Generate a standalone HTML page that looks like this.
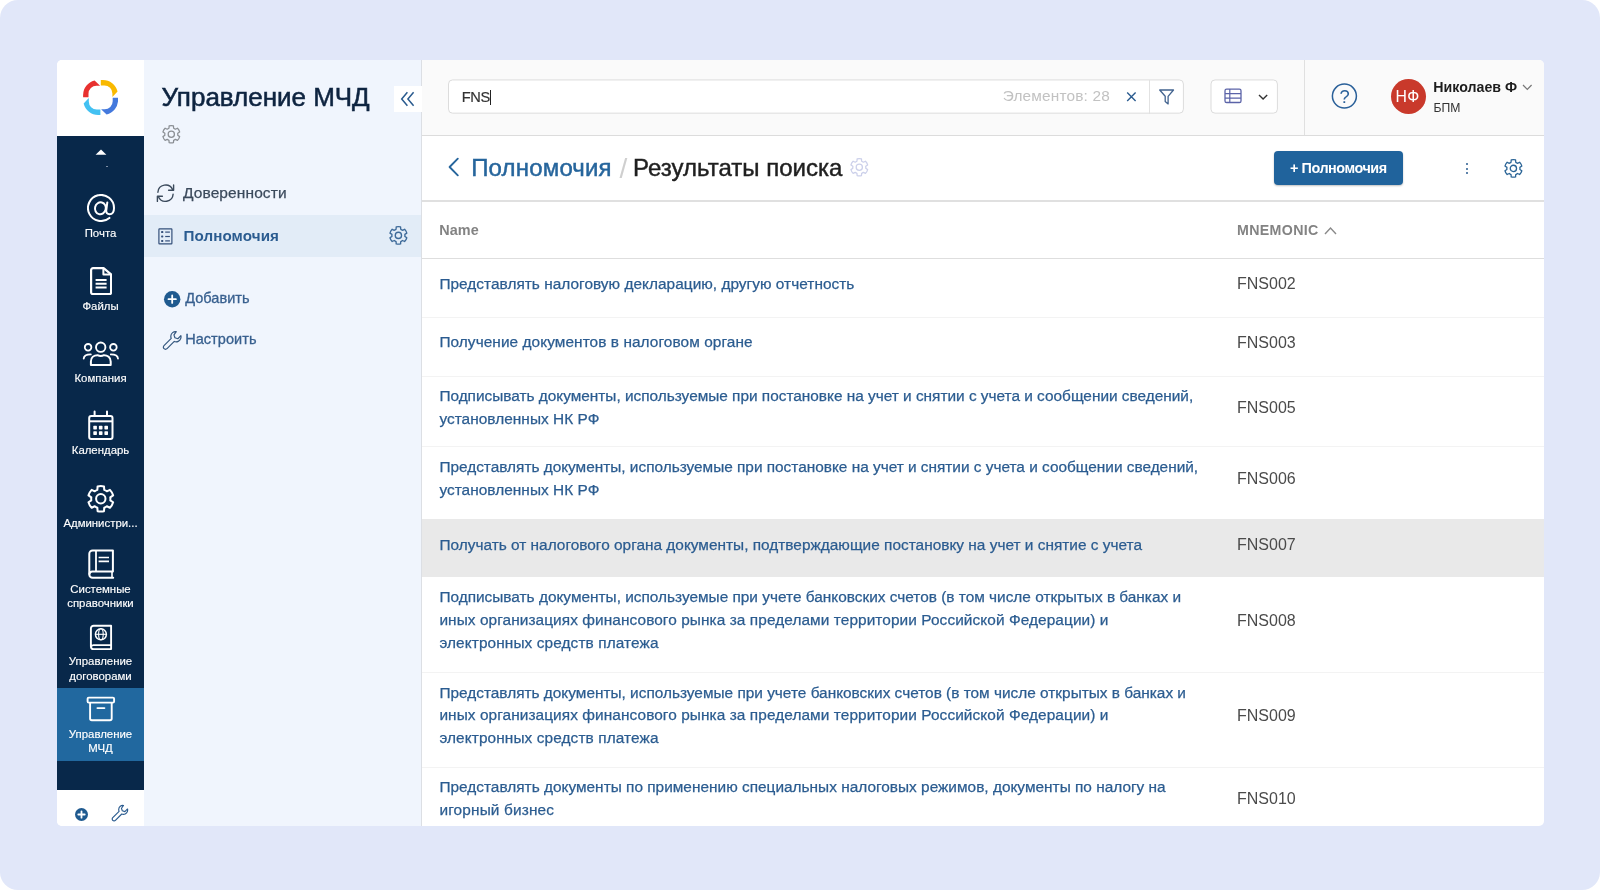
<!DOCTYPE html>
<html lang="ru">
<head>
<meta charset="utf-8">
<title>Управление МЧД</title>
<style>
*{box-sizing:border-box;margin:0;padding:0}
html,body{width:1600px;height:890px;overflow:hidden;background:#fff}
body{font-family:"Liberation Sans",sans-serif;color:#333;position:relative}
.abs{position:absolute}
.t{position:absolute;line-height:1;white-space:nowrap}
#frame{position:absolute;left:0;top:0;width:1600px;height:890px;background:#e1e7f9;border-radius:18px;overflow:hidden}
#card{position:absolute;left:57px;top:60px;width:1487px;height:766px;background:#fff;border-radius:5px;overflow:hidden}
#o{position:absolute;left:-57px;top:-60px;width:1600px;height:890px;will-change:transform}
.sl{position:absolute;left:57px;width:87px;text-align:center;color:#fff;font-size:11.4px;-webkit-text-stroke:0.15px #fff;line-height:1;white-space:nowrap}
.nm{position:absolute;left:439.5px;color:#2b5c90;font-size:15.4px;line-height:23.4px;white-space:nowrap}
.mc{position:absolute;left:1237px;color:#4b4b4b;font-size:16px;line-height:1;white-space:nowrap}
</style>
</head>
<body>
<div id="frame">
<div id="card">
<div id="o">
<!-- sidebar -->
<div class="abs" style="left:57px;top:60px;width:87px;height:766px;background:#08284a;"></div>
<div class="abs" style="left:57px;top:60px;width:87px;height:76px;background:#fff;"></div>
<svg class="abs" style="left:83px;top:80px" width="35.2" height="35" viewBox="0 0 35.2 35" fill="none" ><path d="M0.1 17.3V15.1A15 15 0 0 1 11.6 0.55L17.1 5.7H13.5A8 8 0 0 0 5.5 13.7V17.3Z" fill="#e8312f" transform="rotate(0 17.6 17.5)"/><path d="M0.1 17.3V15.1A15 15 0 0 1 11.6 0.55L17.1 5.7H13.5A8 8 0 0 0 5.5 13.7V17.3Z" fill="#f9b900" transform="rotate(90 17.6 17.5)"/><path d="M0.1 17.3V15.1A15 15 0 0 1 11.6 0.55L17.1 5.7H13.5A8 8 0 0 0 5.5 13.7V17.3Z" fill="#4479dd" transform="rotate(180 17.6 17.5)"/><path d="M0.1 17.3V15.1A15 15 0 0 1 11.6 0.55L17.1 5.7H13.5A8 8 0 0 0 5.5 13.7V17.3Z" fill="#43c1f2" transform="rotate(270 17.6 17.5)"/></svg>
<svg class="abs" style="left:94px;top:148px" width="14" height="8" viewBox="0 0 14 8" fill="none" ><path d="M1.6 6.8L7 1.4L12.4 6.8Z" fill="#fff"/></svg>
<div class="abs" style="left:106px;top:166px;width:1.5px;height:1.2px;background:#7d8da3;"></div>
<svg class="abs" style="left:86.8px;top:194.3px" width="28" height="28" viewBox="0 0 28 28" fill="none" ><path d="M22.4 23.9A13 13 0 1 1 27 14C27 18 25 20.2 22.6 20.2C20.2 20.2 18.9 18.6 19.3 16.2L20.3 8.4" stroke="#fff" stroke-width="2" stroke-linecap="round"/><ellipse cx="13.4" cy="14.3" rx="5.4" ry="6" transform="rotate(14 13.4 14.3)" stroke="#fff" stroke-width="2"/></svg>
<div class="sl" style="top:227.65px">Почта</div>
<svg class="abs" style="left:89.7px;top:266.8px" width="22.2" height="28.3" viewBox="0 0 22.2 28.3" fill="none" ><path d="M3.6 1.1H13.6L21.1 7.4V25.2A2 2 0 0 1 19.1 27.2H3.1A2 2 0 0 1 1.1 25.2V3.1A2 2 0 0 1 3.1 1.1Z" stroke="#fff" stroke-width="2.2" stroke-linejoin="round"/><path d="M13.4 1.4V7.6H21" stroke="#fff" stroke-width="2" stroke-linejoin="round"/><path d="M5.6 13.1H16.6M5.6 16.8H16.6M5.6 20.4H16.6" stroke="#fff" stroke-width="2"/></svg>
<div class="sl" style="top:300.85px">Файлы</div>
<svg class="abs" style="left:82px;top:340px" width="38" height="27" viewBox="0 0 38 27" fill="none" ><circle cx="18.7" cy="7.2" r="4.7" stroke="#fff" stroke-width="1.9"/><circle cx="6.1" cy="7.3" r="3.3" stroke="#fff" stroke-width="1.8"/><circle cx="31.4" cy="7.3" r="3.3" stroke="#fff" stroke-width="1.8"/><path d="M8.9 25H28.7V21.5C28.7 17.5 25.5 15.2 22 15.2C20 16.2 17.5 16.2 15.5 15.2C12 15.2 8.9 17.5 8.9 21.5Z" stroke="#fff" stroke-width="2" stroke-linejoin="round"/><path d="M1.7 18.6C1.9 16 4 14.4 8.8 14.4" stroke="#fff" stroke-width="1.8" stroke-linecap="round"/><path d="M36 18.6C35.8 16 33.6 14.4 28.8 14.4" stroke="#fff" stroke-width="1.8" stroke-linecap="round"/></svg>
<div class="sl" style="top:372.55px">Компания</div>
<svg class="abs" style="left:87px;top:410px" width="28" height="32" viewBox="0 0 28 32" fill="none" ><rect x="2.2" y="6.1" width="23.3" height="23" rx="2" stroke="#fff" stroke-width="2"/><path d="M2.2 11.3H25.5" stroke="#fff" stroke-width="2"/><path d="M7.6 1.6V6M20 1.6V6" stroke="#fff" stroke-width="2" stroke-linecap="round"/><rect x="6.3" y="15.8" width="3.6" height="3.6" rx="0.6" fill="#fff"/><rect x="6.3" y="21.3" width="3.6" height="3.6" rx="0.6" fill="#fff"/><rect x="11.9" y="15.8" width="3.6" height="3.6" rx="0.6" fill="#fff"/><rect x="11.9" y="21.3" width="3.6" height="3.6" rx="0.6" fill="#fff"/><rect x="17.4" y="15.8" width="3.6" height="3.6" rx="0.6" fill="#fff"/><rect x="17.4" y="21.3" width="3.6" height="3.6" rx="0.6" fill="#fff"/></svg>
<div class="sl" style="top:445.45px">Календарь</div>
<svg class="abs" style="left:85.1px;top:482.6px" width="31.6" height="31.6" viewBox="0 0 31.6 31.6" fill="none" ><path d="M19.24 6.84L19 3.41A12.8 12.8 0 0 0 12.6 3.41L12.36 6.84A9.6 9.6 0 0 0 9.76 8.34L6.67 6.83A12.8 12.8 0 0 0 3.47 12.38L6.32 14.3A9.6 9.6 0 0 0 6.32 17.3L3.47 19.22A12.8 12.8 0 0 0 6.67 24.77L9.76 23.26A9.6 9.6 0 0 0 12.36 24.76L12.6 28.19A12.8 12.8 0 0 0 19 28.19L19.24 24.76A9.6 9.6 0 0 0 21.84 23.26L24.93 24.77A12.8 12.8 0 0 0 28.13 19.22L25.28 17.3A9.6 9.6 0 0 0 25.28 14.3L28.13 12.38A12.8 12.8 0 0 0 24.93 6.83L21.84 8.34A9.6 9.6 0 0 0 19.24 6.84Z" stroke="#fff" stroke-width="2" stroke-linejoin="round"/><circle cx="15.8" cy="15.8" r="4.7" stroke="#fff" stroke-width="2"/></svg>
<div class="sl" style="top:517.85px">Администри...</div>
<svg class="abs" style="left:87px;top:548px" width="28" height="32" viewBox="0 0 28 32" fill="none" ><path d="M25.9 23.5V2.4H5.6A3.3 3.3 0 0 0 2.3 5.7V26.4A3.3 3.3 0 0 0 5.6 29.7H26.2" stroke="#fff" stroke-width="2" stroke-linejoin="round" stroke-linecap="round"/><path d="M25.9 23.5H5.4A3.1 3.1 0 0 0 2.4 26.5" stroke="#fff" stroke-width="2"/><path d="M9 2.4V23.5" stroke="#fff" stroke-width="1.8"/><path d="M25 23.5V29.7" stroke="#fff" stroke-width="1.6"/><path d="M11.6 9.5H22M11.6 13.3H22" stroke="#fff" stroke-width="1.7"/></svg>
<div class="sl" style="top:583.55px">Системные</div>
<div class="sl" style="top:597.55px">справочники</div>
<svg class="abs" style="left:88px;top:623px" width="26" height="28" viewBox="0 0 26 28" fill="none" ><path d="M23.1 22.1V2.7H5.6A2.7 2.7 0 0 0 2.9 5.4V23.4A2.7 2.7 0 0 0 5.6 26.1H23.1V22.1H5.6A2.6 2.6 0 0 0 3 24" stroke="#fff" stroke-width="1.9" stroke-linejoin="round"/><circle cx="12.9" cy="11.3" r="5.5" stroke="#fff" stroke-width="1.5"/><ellipse cx="12.9" cy="11.3" rx="2.3" ry="5.5" stroke="#fff" stroke-width="1.1"/><path d="M7.4 11.3H18.4" stroke="#fff" stroke-width="1.1"/></svg>
<div class="sl" style="top:655.75px">Управление</div>
<div class="sl" style="top:670.65px">договорами</div>
<div class="abs" style="left:57px;top:688px;width:87px;height:72.8px;background:#21689f;"></div>
<svg class="abs" style="left:85px;top:695px" width="32" height="28" viewBox="0 0 32 28" fill="none" ><rect x="2.6" y="2.6" width="26.5" height="5" rx="1.2" stroke="#fff" stroke-width="1.9"/><path d="M5.1 7.8V23.6A1.7 1.7 0 0 0 6.8 25.3H25A1.7 1.7 0 0 0 26.7 23.6V7.8" stroke="#fff" stroke-width="1.9"/><path d="M12.4 13.1H19.4" stroke="#fff" stroke-width="1.9" stroke-linecap="round"/></svg>
<div class="sl" style="top:728.75px">Управление</div>
<div class="sl" style="top:742.75px">МЧД</div>
<div class="abs" style="left:57px;top:790px;width:87px;height:36px;background:#fff;"></div>
<svg class="abs" style="left:73.8px;top:806.6px" width="15" height="15" viewBox="0 0 15 15" fill="none" ><circle cx="7.5" cy="7.5" r="6.5" fill="#1f5a8f"/><path d="M4.3 7.5H10.7M7.5 4.3V10.7" stroke="#fff" stroke-width="1.8" stroke-linecap="round"/></svg>
<svg class="abs" style="left:111.2px;top:804.4px" width="18.4" height="18.4" viewBox="0 0 20 20" fill="none" ><path d="M13.6 1.6C11 1.2 8.6 3 8.4 5.7C8.35 6.5 8.5 7.3 8.8 8L1.9 14.9C1.1 15.7 1.1 17 1.9 17.8C2.7 18.6 4 18.6 4.8 17.8L11.7 10.9C14.2 11.9 17.1 10.6 17.9 8C18.2 7.1 18.2 6.2 18 5.4L15.1 8.3L12.3 7.4L11.4 4.6Z" stroke="#2a5b8f" stroke-width="1.25" stroke-linejoin="round"/></svg>
<!-- panel -->
<div class="abs" style="left:144px;top:60px;width:277.5px;height:766px;background:#f0f5fd;"></div>
<div class="abs" style="left:420.8px;top:60px;width:1.2px;height:766px;background:#dcdfe4;"></div>
<div class="abs" style="left:394px;top:86.4px;width:28px;height:25.5px;background:#fff;"></div>
<svg class="abs" style="left:399px;top:89px" width="17" height="20" viewBox="0 0 17 20" fill="none" ><path d="M8.4 3.2L2.7 10L8.4 16.8M14.6 3.2L8.9 10L14.6 16.8" stroke="#2a5b8f" stroke-width="1.5"/></svg>
<div class="t" style="left:161.5px;top:84.39px;font-size:26px;color:#0e2440;-webkit-text-stroke:0.55px #0e2440;">Управление МЧД</div>
<svg class="abs" style="left:159.8px;top:123px" width="22.6" height="22.6" viewBox="0 0 22.6 22.6" fill="none" ><path d="M13.63 5.23L13.47 2.9A8.68 8.68 0 0 0 9.13 2.9L8.97 5.23A6.51 6.51 0 0 0 7.21 6.24L5.11 5.22A8.68 8.68 0 0 0 2.94 8.98L4.87 10.28A6.51 6.51 0 0 0 4.87 12.32L2.94 13.62A8.68 8.68 0 0 0 5.11 17.38L7.21 16.36A6.51 6.51 0 0 0 8.97 17.37L9.13 19.7A8.68 8.68 0 0 0 13.47 19.7L13.63 17.37A6.51 6.51 0 0 0 15.39 16.36L17.49 17.38A8.68 8.68 0 0 0 19.66 13.62L17.73 12.32A6.51 6.51 0 0 0 17.73 10.28L19.66 8.98A8.68 8.68 0 0 0 17.49 5.22L15.39 6.24A6.51 6.51 0 0 0 13.63 5.23Z" stroke="#8b8f94" stroke-width="1.25" stroke-linejoin="round"/><circle cx="11.3" cy="11.3" r="3.12" stroke="#8b8f94" stroke-width="1.25"/></svg>
<svg class="abs" style="left:155px;top:183px" width="21" height="21" viewBox="0 0 21 21" fill="none" ><path d="M2.9 9.2A7.7 7.7 0 0 1 17.6 6.6" stroke="#3b4a5c" stroke-width="1.4" stroke-linecap="round"/><path d="M18.6 2V7.2H13.6" stroke="#3b4a5c" stroke-width="1.4" stroke-linecap="round" stroke-linejoin="round"/><path d="M18.1 11.2A7.7 7.7 0 0 1 3.4 13.8" stroke="#3b4a5c" stroke-width="1.4" stroke-linecap="round"/><path d="M2.4 18.4V13.2H7.4" stroke="#3b4a5c" stroke-width="1.4" stroke-linecap="round" stroke-linejoin="round"/></svg>
<div class="t" style="left:183px;top:185.08px;font-size:15.5px;color:#3b4a5c;letter-spacing:0.1px;-webkit-text-stroke:0.25px #3b4a5c;">Доверенности</div>
<div class="abs" style="left:144px;top:214.8px;width:276.8px;height:42.6px;background:#e2ecf7;"></div>
<svg class="abs" style="left:157px;top:227px" width="18" height="19" viewBox="0 0 18 19" fill="none" ><rect x="1.9" y="1.8" width="13" height="15" rx="0.6" stroke="#35507b" stroke-width="1.2"/><rect x="4.1" y="4.1" width="2.2" height="2" rx="0.7" fill="#35507b"/><path d="M8.2 5.1H12.9" stroke="#35507b" stroke-width="1.2"/><rect x="4.1" y="8.5" width="2.2" height="2" rx="0.7" fill="#35507b"/><path d="M8.2 9.5H12.9" stroke="#35507b" stroke-width="1.2"/><rect x="4.1" y="12.9" width="2.2" height="2" rx="0.7" fill="#35507b"/><path d="M8.2 13.9H12.9" stroke="#35507b" stroke-width="1.2"/></svg>
<div class="t" style="left:183.4px;top:227.93px;font-size:15.2px;color:#2b5c90;font-weight:700;letter-spacing:0.1px;">Полномочия</div>
<svg class="abs" style="left:386.6px;top:224.4px" width="22.8" height="22.8" viewBox="0 0 22.8 22.8" fill="none" ><path d="M13.75 5.29L13.58 2.95A8.72 8.72 0 0 0 9.22 2.95L9.05 5.29A6.54 6.54 0 0 0 7.28 6.31L5.18 5.28A8.72 8.72 0 0 0 2.99 9.07L4.94 10.38A6.54 6.54 0 0 0 4.94 12.42L2.99 13.73A8.72 8.72 0 0 0 5.18 17.52L7.28 16.49A6.54 6.54 0 0 0 9.05 17.51L9.22 19.85A8.72 8.72 0 0 0 13.58 19.85L13.75 17.51A6.54 6.54 0 0 0 15.52 16.49L17.62 17.52A8.72 8.72 0 0 0 19.81 13.73L17.86 12.42A6.54 6.54 0 0 0 17.86 10.38L19.81 9.07A8.72 8.72 0 0 0 17.62 5.28L15.52 6.31A6.54 6.54 0 0 0 13.75 5.29Z" stroke="#3d6a99" stroke-width="1.35" stroke-linejoin="round"/><circle cx="11.4" cy="11.4" r="3.14" stroke="#3d6a99" stroke-width="1.35"/></svg>
<svg class="abs" style="left:163.1px;top:289.9px" width="18.4" height="18.4" viewBox="0 0 18.4 18.4" fill="none" ><circle cx="9.2" cy="9.2" r="8.2" fill="#1f5a8f"/><path d="M5.5 9.2H12.9M9.2 5.5V12.9" stroke="#fff" stroke-width="1.8" stroke-linecap="round"/></svg>
<div class="t" style="left:185.2px;top:291.13px;font-size:14.5px;color:#38608f;letter-spacing:0.05px;-webkit-text-stroke:0.3px #38608f;">Добавить</div>
<svg class="abs" style="left:161.6px;top:329.6px" width="21" height="21" viewBox="0 0 20 20" fill="none" ><path d="M13.6 1.6C11 1.2 8.6 3 8.4 5.7C8.35 6.5 8.5 7.3 8.8 8L1.9 14.9C1.1 15.7 1.1 17 1.9 17.8C2.7 18.6 4 18.6 4.8 17.8L11.7 10.9C14.2 11.9 17.1 10.6 17.9 8C18.2 7.1 18.2 6.2 18 5.4L15.1 8.3L12.3 7.4L11.4 4.6Z" stroke="#35587f" stroke-width="1.15" stroke-linejoin="round"/></svg>
<div class="t" style="left:185.2px;top:332.23px;font-size:14.5px;color:#38608f;letter-spacing:0.05px;-webkit-text-stroke:0.3px #38608f;">Настроить</div>
<!-- topbar -->
<div class="abs" style="left:422px;top:60px;width:1122px;height:75px;background:#fafafa;"></div>
<div class="abs" style="left:422px;top:134.6px;width:1122px;height:1.2px;background:#dcdcdc;"></div>
<div class="abs" style="left:1304.3px;top:60px;width:1.2px;height:75px;background:#e0e0e0;"></div>
<svg class="abs" style="left:446px;top:77px" width="740" height="39" viewBox="0 0 740 39" fill="none" ><rect x="2.5" y="2.95" width="734.9" height="33.2" rx="4" fill="#fff" stroke="#dcdcdc" stroke-width="1"/></svg>
<div class="abs" style="left:1149px;top:80px;width:1px;height:33.5px;background:#e2e2e2;"></div>
<div class="t" style="left:461.8px;top:90.04px;font-size:14.6px;color:#333;letter-spacing:-0.4px;-webkit-text-stroke:0.2px #333;">FNS</div>
<div class="abs" style="left:489.6px;top:89.6px;width:1.2px;height:15.6px;background:#222;"></div>
<div class="t" style="left:1002.7px;top:87.76px;font-size:15.4px;color:#c2c2c2;letter-spacing:0.17px;">Элементов: 28</div>
<svg class="abs" style="left:1125px;top:91px" width="13" height="12" viewBox="0 0 13 12" fill="none" ><path d="M2.2 1.6L10.6 10M10.6 1.6L2.2 10" stroke="#2a5b8f" stroke-width="1.4"/></svg>
<svg class="abs" style="left:1157px;top:87px" width="19" height="19" viewBox="0 0 19 19" fill="none" ><path d="M2.7 3H16.5L11.1 9.3V16.9L8.2 14.6V9.3Z" stroke="#42638f" stroke-width="1.3" stroke-linejoin="round"/></svg>
<svg class="abs" style="left:1208px;top:77px" width="72" height="39" viewBox="0 0 72 39" fill="none" ><rect x="3" y="2.95" width="66.4" height="33.2" rx="4" fill="#fff" stroke="#dcdcdc" stroke-width="1"/></svg>
<svg class="abs" style="left:1223px;top:87px" width="20" height="17" viewBox="0 0 20 17" fill="none" ><rect x="2" y="2.1" width="16" height="13.4" rx="1.6" stroke="#5b63a8" stroke-width="1.3"/><path d="M2 6.6H18M2 11.1H18M6.8 2.1V15.5" stroke="#5b63a8" stroke-width="1.2"/></svg>
<svg class="abs" style="left:1257.2px;top:92.9px" width="12.2" height="8" viewBox="0 0 12.2 8" fill="none" ><path d="M2 2L6.1 6L10.2 2" stroke="#333" stroke-width="1.4"/></svg>
<svg class="abs" style="left:1330px;top:82px" width="29" height="29" viewBox="0 0 29 29" fill="none" ><circle cx="14.4" cy="14.1" r="12" stroke="#2a6099" stroke-width="1.5"/></svg>
<div class="t" style="left:1339.6px;top:87.92px;font-size:18.4px;color:#2a6099;">?</div>
<div class="abs" style="left:1391px;top:79.1px;width:35px;height:35px;background:#c9392b;border-radius:50%;"></div>
<div class="t" style="left:1395.4px;top:88.93px;font-size:15.8px;color:#fff;letter-spacing:0.5px;">НФ</div>
<div class="t" style="left:1433.3px;top:80.38px;font-size:14.2px;color:#1d1d1d;font-weight:700;">Николаев Ф</div>
<svg class="abs" style="left:1520.8px;top:83.3px" width="12.6" height="8.5" viewBox="0 0 12.6 8.5" fill="none" ><path d="M2 2L6.3 6.5L10.6 2" stroke="#777" stroke-width="1.2"/></svg>
<div class="t" style="left:1433.4px;top:101.87px;font-size:12.2px;color:#333;">БПМ</div>
<!-- header -->
<svg class="abs" style="left:446px;top:156px" width="14" height="22" viewBox="0 0 14 22" fill="none" ><path d="M11.8 2.7L3.6 11L11.8 19.3" stroke="#26659c" stroke-width="1.9" stroke-linecap="round" stroke-linejoin="round"/></svg>
<div class="t" style="left:471.2px;top:155.88px;font-size:24px;color:#26659c;letter-spacing:0.17px;-webkit-text-stroke:0.45px #26659c;">Полномочия</div>
<div class="t" style="left:619.6px;top:154.9px;font-size:28px;color:#cfcfcf;">/</div>
<div class="t" style="left:633.1px;top:155.88px;font-size:24px;color:#1f1f1f;-webkit-text-stroke:0.45px #1f1f1f;">Результаты поиска</div>
<svg class="abs" style="left:848px;top:156.2px" width="22.6" height="22.6" viewBox="0 0 22.6 22.6" fill="none" ><path d="M13.63 5.23L13.47 2.9A8.68 8.68 0 0 0 9.13 2.9L8.97 5.23A6.51 6.51 0 0 0 7.21 6.24L5.11 5.22A8.68 8.68 0 0 0 2.94 8.98L4.87 10.28A6.51 6.51 0 0 0 4.87 12.32L2.94 13.62A8.68 8.68 0 0 0 5.11 17.38L7.21 16.36A6.51 6.51 0 0 0 8.97 17.37L9.13 19.7A8.68 8.68 0 0 0 13.47 19.7L13.63 17.37A6.51 6.51 0 0 0 15.39 16.36L17.49 17.38A8.68 8.68 0 0 0 19.66 13.62L17.73 12.32A6.51 6.51 0 0 0 17.73 10.28L19.66 8.98A8.68 8.68 0 0 0 17.49 5.22L15.39 6.24A6.51 6.51 0 0 0 13.63 5.23Z" stroke="#ccd0ea" stroke-width="1.25" stroke-linejoin="round"/><circle cx="11.3" cy="11.3" r="3.12" stroke="#ccd0ea" stroke-width="1.25"/></svg>
<div class="abs" style="left:1274px;top:151px;width:128.6px;height:34px;background:#20639c;border-radius:4px;box-shadow:0 1px 2px rgba(0,0,0,.25);"></div>
<div class="t" style="left:1290px;top:161.41px;font-size:14.4px;color:#fff;font-weight:700;letter-spacing:-0.45px;">+ Полномочия</div>
<div class="abs" style="left:1465.6px;top:163px;width:2px;height:2px;background:#2a5b8f;border-radius:1px;"></div><div class="abs" style="left:1465.6px;top:167.7px;width:2px;height:2px;background:#2a5b8f;border-radius:1px;"></div><div class="abs" style="left:1465.6px;top:172.4px;width:2px;height:2px;background:#2a5b8f;border-radius:1px;"></div>
<svg class="abs" style="left:1502.2px;top:157.2px" width="22.8" height="22.8" viewBox="0 0 22.8 22.8" fill="none" ><path d="M13.75 5.27L13.59 2.93A8.75 8.75 0 0 0 9.21 2.93L9.05 5.27A6.56 6.56 0 0 0 7.27 6.3L5.16 5.27A8.75 8.75 0 0 0 2.97 9.06L4.92 10.37A6.56 6.56 0 0 0 4.92 12.43L2.97 13.74A8.75 8.75 0 0 0 5.16 17.53L7.27 16.5A6.56 6.56 0 0 0 9.05 17.53L9.21 19.87A8.75 8.75 0 0 0 13.59 19.87L13.75 17.53A6.56 6.56 0 0 0 15.53 16.5L17.64 17.53A8.75 8.75 0 0 0 19.83 13.74L17.88 12.43A6.56 6.56 0 0 0 17.88 10.37L19.83 9.06A8.75 8.75 0 0 0 17.64 5.27L15.53 6.3A6.56 6.56 0 0 0 13.75 5.27Z" stroke="#2a6496" stroke-width="1.3" stroke-linejoin="round"/><circle cx="11.4" cy="11.4" r="3.15" stroke="#2a6496" stroke-width="1.3"/></svg>
<div class="abs" style="left:422px;top:200.4px;width:1122px;height:1.4px;background:#e0e0e0;"></div>
<!-- table -->
<div class="t" style="left:439.3px;top:222.81px;font-size:14.4px;color:#838383;font-weight:700;letter-spacing:0.05px;">Name</div>
<div class="t" style="left:1237px;top:222.98px;font-size:14.2px;color:#838383;font-weight:700;letter-spacing:0.35px;">MNEMONIC</div>
<svg class="abs" style="left:1323.4px;top:226.2px" width="15" height="10" viewBox="0 0 15 10" fill="none" ><path d="M2 8L7.5 2L13 8" stroke="#8a8a8a" stroke-width="1.4"/></svg>
<div class="abs" style="left:422px;top:257.5px;width:1122px;height:1.3px;background:#dedede;"></div>
<div class="abs" style="left:422px;top:316.9px;width:1122px;height:1px;background:#f3f3f3;"></div>
<div class="abs" style="left:422px;top:375.8px;width:1122px;height:1px;background:#f3f3f3;"></div>
<div class="abs" style="left:422px;top:446px;width:1122px;height:1px;background:#f3f3f3;"></div>
<div class="abs" style="left:422px;top:519px;width:1122px;height:58px;background:#e9e9e9;"></div>
<div class="abs" style="left:422px;top:671.5px;width:1122px;height:1px;background:#f3f3f3;"></div>
<div class="abs" style="left:422px;top:766.5px;width:1122px;height:1px;background:#f3f3f3;"></div>
<div class="t" style="left:439.4px;top:275.76px;font-size:15.4px;color:#2b5c90;letter-spacing:0.03px;-webkit-text-stroke:0.25px #2b5c90;">Представлять налоговую декларацию, другую отчетность</div>
<div class="t" style="left:1237px;top:276.46px;font-size:16px;color:#4b4b4b;">FNS002</div>
<div class="t" style="left:439.4px;top:334.26px;font-size:15.4px;color:#2b5c90;letter-spacing:0.07px;-webkit-text-stroke:0.25px #2b5c90;">Получение документов в налоговом органе</div>
<div class="t" style="left:1237px;top:334.96px;font-size:16px;color:#4b4b4b;">FNS003</div>
<div class="t" style="left:439.4px;top:387.96px;font-size:15.4px;color:#2b5c90;letter-spacing:-0.01px;-webkit-text-stroke:0.25px #2b5c90;">Подписывать документы, используемые при постановке на учет и снятии с учета и сообщении сведений,</div>
<div class="t" style="left:439.4px;top:410.66px;font-size:15.4px;color:#2b5c90;letter-spacing:0.04px;-webkit-text-stroke:0.25px #2b5c90;">установленных НК РФ</div>
<div class="t" style="left:1237px;top:399.66px;font-size:16px;color:#4b4b4b;">FNS005</div>
<div class="t" style="left:439.4px;top:459.36px;font-size:15.4px;color:#2b5c90;letter-spacing:-0.01px;-webkit-text-stroke:0.25px #2b5c90;">Представлять документы, используемые при постановке на учет и снятии с учета и сообщении сведений,</div>
<div class="t" style="left:439.4px;top:482.26px;font-size:15.4px;color:#2b5c90;letter-spacing:0.04px;-webkit-text-stroke:0.25px #2b5c90;">установленных НК РФ</div>
<div class="t" style="left:1237px;top:471.16px;font-size:16px;color:#4b4b4b;">FNS006</div>
<div class="t" style="left:439.4px;top:536.66px;font-size:15.4px;color:#2b5c90;letter-spacing:0.01px;-webkit-text-stroke:0.25px #2b5c90;">Получать от налогового органа документы, подтверждающие постановку на учет и снятие с учета</div>
<div class="t" style="left:1237px;top:536.96px;font-size:16px;color:#4b4b4b;">FNS007</div>
<div class="t" style="left:439.4px;top:589.36px;font-size:15.4px;color:#2b5c90;letter-spacing:0px;-webkit-text-stroke:0.25px #2b5c90;">Подписывать документы, используемые при учете банковских счетов (в том числе открытых в банках и</div>
<div class="t" style="left:439.4px;top:611.96px;font-size:15.4px;color:#2b5c90;letter-spacing:0.08px;-webkit-text-stroke:0.25px #2b5c90;">иных организациях финансового рынка за пределами территории Российской Федерации) и</div>
<div class="t" style="left:439.4px;top:635.36px;font-size:15.4px;color:#2b5c90;letter-spacing:0.1px;-webkit-text-stroke:0.25px #2b5c90;">электронных средств платежа</div>
<div class="t" style="left:1237px;top:612.56px;font-size:16px;color:#4b4b4b;">FNS008</div>
<div class="t" style="left:439.4px;top:684.66px;font-size:15.4px;color:#2b5c90;letter-spacing:0px;-webkit-text-stroke:0.25px #2b5c90;">Представлять документы, используемые при учете банковских счетов (в том числе открытых в банках и</div>
<div class="t" style="left:439.4px;top:707.16px;font-size:15.4px;color:#2b5c90;letter-spacing:0.08px;-webkit-text-stroke:0.25px #2b5c90;">иных организациях финансового рынка за пределами территории Российской Федерации) и</div>
<div class="t" style="left:439.4px;top:730.46px;font-size:15.4px;color:#2b5c90;letter-spacing:0.1px;-webkit-text-stroke:0.25px #2b5c90;">электронных средств платежа</div>
<div class="t" style="left:1237px;top:707.76px;font-size:16px;color:#4b4b4b;">FNS009</div>
<div class="t" style="left:439.4px;top:779.46px;font-size:15.4px;color:#2b5c90;letter-spacing:0.01px;-webkit-text-stroke:0.25px #2b5c90;">Представлять документы по применению специальных налоговых режимов, документы по налогу на</div>
<div class="t" style="left:439.4px;top:801.66px;font-size:15.4px;color:#2b5c90;letter-spacing:0.15px;-webkit-text-stroke:0.25px #2b5c90;">игорный бизнес</div>
<div class="t" style="left:1237px;top:790.66px;font-size:16px;color:#4b4b4b;">FNS010</div>
</div>
</div>
</div>
</body>
</html>
